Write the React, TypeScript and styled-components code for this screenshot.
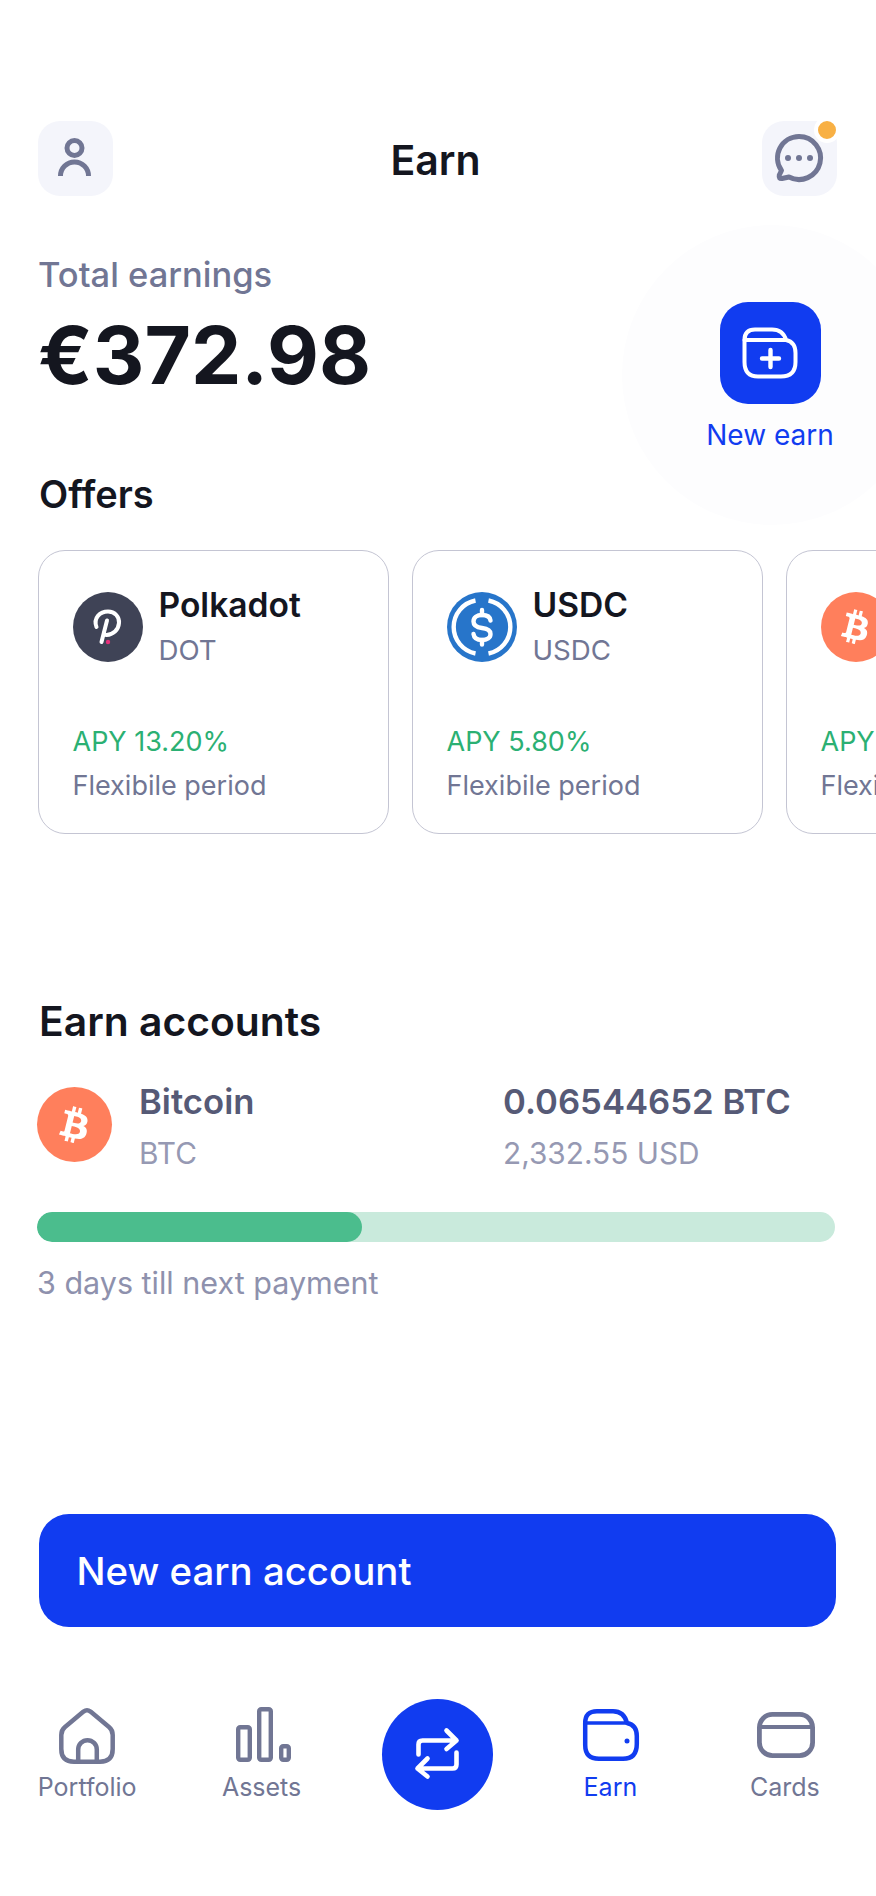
import React from "react";
import styled, { createGlobalStyle } from "styled-components";
import { FaBtc } from "react-icons/fa";

const GlobalStyle = createGlobalStyle`
  html, body { margin: 0; padding: 0; background: #fff; }
  * { box-sizing: border-box; }
  body { font-family: Inter, "Noto Sans", sans-serif; -webkit-font-smoothing: antialiased; }
`;

const BLUE = "#113cf0";
const DARK = "#14161f";
const GREY = "#717694";

const Page = styled.div`
  position: relative;
  width: 876px;
  height: 1896px;
  overflow: hidden;
  background: #fff;
  padding-top: 121px;
  display: flex;
  flex-direction: column;
`;

const Halo = styled.div`
  position: absolute;
  left: 622px;
  top: 225px;
  width: 300px;
  height: 300px;
  border-radius: 50%;
  background: #fdfdfe;
`;

const Header = styled.header`
  position: relative;
  display: flex;
  align-items: center;
  justify-content: space-between;
  padding: 0 39px 0 38px;
  height: 75px;
`;

const HeaderButton = styled.div`
  position: relative;
  width: 75px;
  height: 75px;
  border-radius: 22px;
  background: #f4f5fb;
  color: ${GREY};
`;

const IconSvg = styled.svg`
  display: block;
  overflow: visible;
`;

const NotifyDot = styled.span`
  position: absolute;
  top: -4px;
  right: -3px;
  width: 26px;
  height: 26px;
  border-radius: 50%;
  background: #f8b044;
  border: 4px solid #fff;
`;

const Title = styled.h1`
  margin: 2px 4px 0 0;
  font-size: 41px;
  line-height: 48px;
  font-weight: 600;
  color: ${DARK};
`;

const Summary = styled.section`
  position: relative;
  display: flex;
  justify-content: space-between;
  padding: 59px 43px 0 38px;
`;

const SummaryText = styled.div`
  display: flex;
  flex-direction: column;
  gap: 20px;
`;

const SummaryLabel = styled.div`
  font-size: 34.5px;
  line-height: 40px;
  font-weight: 500;
  color: ${GREY};
`;

const Amount = styled.div`
  font-size: 80px;
  line-height: 80px;
  font-weight: 700;
  color: ${DARK};
`;

const NewEarn = styled.div`
  margin-top: 47px;
  width: 126px;
  display: flex;
  flex-direction: column;
  align-items: center;
  gap: 14px;
`;

const NewEarnTile = styled.div`
  width: 101px;
  height: 102px;
  border-radius: 28px;
  background: ${BLUE};
  display: flex;
  align-items: center;
  justify-content: center;
  color: #fff;
`;

const NewEarnLabel = styled.div`
  font-size: 28px;
  line-height: 34px;
  white-space: nowrap;
  color: ${BLUE};
`;

const Heading = styled.h2<{ $size: number; $top: number; $line: number }>`
  position: relative;
  margin: ${(p) => p.$top}px 0 0;
  padding-left: 39px;
  font-size: ${(p) => p.$size}px;
  line-height: ${(p) => p.$line}px;
  font-weight: 600;
  color: ${DARK};
`;

const Carousel = styled.div`
  position: relative;
  margin-top: 33px;
  padding-left: 38px;
  display: flex;
  gap: 23px;
  overflow: hidden;
`;

const Card = styled.article`
  flex: 0 0 351px;
  height: 284px;
  border: 1.5px solid #c4c5d3;
  border-radius: 27px;
  padding: 41px 0 0 33.5px;
  background: #fff;
`;

const CardTop = styled.div`
  display: flex;
  gap: 16px;
  height: 133px;
`;

const CoinCircle = styled.div<{ $bg: string; $size: number }>`
  flex: 0 0 auto;
  width: ${(p) => p.$size}px;
  height: ${(p) => p.$size}px;
  border-radius: 50%;
  background: ${(p) => p.$bg};
  display: flex;
  align-items: center;
  justify-content: center;
  color: #fff;
`;

const BtcGlyph = styled(FaBtc)`
  transform: rotate(14deg);
`;

const CardName = styled.div`
  font-size: 33.6px;
  line-height: 40px;
  margin-top: -7px;
  font-weight: 600;
  color: ${DARK};
`;

const CardCode = styled.div`
  font-size: 27.7px;
  line-height: 34px;
  margin-top: 8px;
  color: ${GREY};
`;

const Apy = styled.div`
  font-size: 27px;
  line-height: 34px;
  color: #2bb073;
  white-space: nowrap;
`;

const Period = styled.div`
  font-size: 27px;
  line-height: 34px;
  margin-top: 10px;
  color: ${GREY};
  white-space: nowrap;
`;

const AccountRow = styled.div`
  margin-top: 41px;
  padding-left: 37px;
  display: grid;
  grid-template-columns: 102px 364px 1fr;
`;

const AccountCell = styled.div`
  display: flex;
  flex-direction: column;
  gap: 14px;
  margin-top: -6px;
`;

const AccountTitle = styled.div`
  font-size: 34.7px;
  line-height: 40px;
  font-weight: 600;
  color: #565a76;
  white-space: nowrap;
`;

const AccountSub = styled.div`
  font-size: 29.8px;
  line-height: 36px;
  color: #9699b3;
  white-space: nowrap;
`;

const Track = styled.div`
  margin: 41px 41px 0 37px;
  height: 30px;
  border-radius: 15px;
  background: #c9eadc;
  overflow: hidden;
`;

const Fill = styled.div`
  height: 100%;
  border-radius: 15px;
  background: #4bbd8d;
`;

const Hint = styled.div`
  margin-top: 23px;
  padding-left: 37px;
  font-size: 30.5px;
  line-height: 36px;
  color: #8e91ad;
`;

const PrimaryButton = styled.button`
  display: block;
  margin: 213px 40px 0 38.5px;
  height: 113px;
  border: 0;
  border-radius: 30px;
  background: ${BLUE};
  color: #fff;
  text-align: left;
  padding: 0 0 0 38px;
  font-family: inherit;
  font-size: 38.4px;
  font-weight: 500;
`;

const Nav = styled.nav`
  margin-top: 72px;
  padding-right: 4px;
  display: grid;
  grid-template-columns: repeat(5, 1fr);
`;

const NavItem = styled.div<{ $active?: boolean }>`
  display: flex;
  flex-direction: column;
  align-items: center;
  padding-top: 7px;
  color: ${(p) => (p.$active ? BLUE : GREY)};
`;

const NavLabel = styled.div`
  margin-top: 6px;
  font-size: 25px;
  line-height: 30px;
`;

const SwapButton = styled.div`
  justify-self: center;
  margin-left: 3px;
  width: 111px;
  height: 111px;
  border-radius: 50%;
  background: ${BLUE};
  color: #fff;
  display: flex;
  align-items: center;
  justify-content: center;
`;

const stroke = { fill: "none", stroke: "currentColor", strokeLinecap: "round", strokeLinejoin: "round" } as const;

const PersonIcon = () => (
  <IconSvg width="75" height="75" viewBox="0 0 75 75" {...stroke} strokeWidth={5}>
    <circle cx="36.5" cy="27" r="7.5" />
    <path d="M22.5 55 A14 14 0 0 1 50.5 55" strokeLinecap="butt" />
  </IconSvg>
);

const ChatIcon = () => (
  <IconSvg width="75" height="75" viewBox="0 0 75 75" {...stroke} strokeWidth={5}>
    <path d="M37 15.5 A21.5 21.5 0 1 1 27 56 L20 57.5 Q16.5 58 17.3 54 L19.5 49.5 A21.5 21.5 0 0 1 37 15.5Z" />
    <circle cx="26" cy="37" r="3" fill="currentColor" stroke="none" />
    <circle cx="37" cy="37" r="3" fill="currentColor" stroke="none" />
    <circle cx="48" cy="37" r="3" fill="currentColor" stroke="none" />
  </IconSvg>
);

const FolderPlusIcon = () => (
  <IconSvg width="60" height="56" viewBox="0 0 60 56" {...stroke} strokeWidth={4}>
    <path d="M15 4.5 H32 Q43 4.5 46 15 Q55.5 17 55.5 28 V37 Q55.5 51.5 41 51.5 H18 Q4.5 51.5 4.5 37 V15 Q4.5 4.5 15 4.5Z" />
    <path d="M4.5 15 H46" />
    <path d="M30.5 25 V42 M22 33.5 H39" strokeWidth={4.4} />
  </IconSvg>
);

const PolkadotLogo = () => (
  <IconSvg width="70" height="70" viewBox="0 0 70 70">
    <path
      d="M23.5 35 C20 26 27 19.5 35 19.5 C42 19.5 46.5 25 46 31 C45.5 38 40 42.5 33.5 43 M34 28.5 L28.5 50"
      fill="none"
      stroke="#fff"
      strokeWidth="4"
      strokeLinecap="round"
    />
    <circle cx="35" cy="50" r="2.2" fill="#e6307a" />
  </IconSvg>
);

const UsdcLogo = () => (
  <IconSvg width="70" height="70" viewBox="0 0 70 70">
    <g fill="none" stroke="#fff" strokeWidth="4.4" strokeLinecap="butt">
      <path d="M28.5 8.5 A27 27 0 0 0 28.5 61.5" />
      <path d="M41.5 8.5 A27 27 0 0 1 41.5 61.5" />
    </g>
    <g fill="none" stroke="#fff" strokeWidth="4.4" strokeLinecap="round">
      <path d="M43.5 28.5 C43 24.5 39.5 23 35 23 C30 23 26.5 25.5 26.5 29.5 C26.5 34 30.5 35.5 35 36 C39.5 36.5 43.5 38 43.5 42 C43.5 46 40 48 35 48 C30 48 27 46 26.5 42" />
      <path d="M35 18 V23 M35 48 V52.5" />
    </g>
  </IconSvg>
);

const HomeIcon = () => (
  <IconSvg width="60" height="60" viewBox="0 0 60 60" {...stroke} strokeWidth={4.5}>
    <path d="M26.5 5.6 L8 21 Q4.3 24 4.3 29 V43 Q4.3 55.7 17 55.7 H43 Q55.7 55.7 55.7 43 V29 Q55.7 24 52 21 L33.5 5.6 Q30 3 26.5 5.6Z" />
    <path d="M21.2 55 V43.5 a9.3 9.3 0 0 1 18.6 0 V55" />
  </IconSvg>
);

const BarsIcon = () => (
  <IconSvg width="60" height="60" viewBox="0 0 60 60" {...stroke} strokeWidth={4.4}>
    <rect x="6.2" y="21.2" width="11.6" height="32.6" rx="2" />
    <rect x="27.2" y="3.2" width="11.6" height="50.6" rx="2" />
    <rect x="49.2" y="40.2" width="7.6" height="13.6" rx="2" />
  </IconSvg>
);

const SwapIcon = () => (
  <IconSvg width="60" height="60" viewBox="0 0 60 60" {...stroke} strokeWidth={4.6}>
    <path d="M11.5 29.5 V19.5 Q11.5 15.5 15.5 15.5 H49.5 M39.5 5.5 L49.5 15.5 L39.5 24" />
    <path d="M49.5 27.5 V39.5 Q49.5 43.5 45.5 43.5 H10.5 M20.5 33.5 L10.5 43.5 L20.5 51.5" />
  </IconSvg>
);

const WalletIcon = () => (
  <IconSvg width="60" height="60" viewBox="0 0 60 60" {...stroke} strokeWidth={4.5}>
    <path d="M17 5.2 H33 Q44 5.2 47 17 Q56.8 19 56.8 30 V38 Q56.8 52.8 43 52.8 H19 Q5.2 52.8 5.2 39 V17 Q5.2 5.2 17 5.2Z" />
    <path d="M5.2 17 H47" strokeWidth={3.6} />
    <circle cx="47" cy="35" r="2.5" fill="currentColor" stroke="none" />
  </IconSvg>
);

const CardIcon = () => (
  <IconSvg width="60" height="60" viewBox="0 0 60 60" {...stroke} strokeWidth={4.8}>
    <rect x="4.4" y="8.4" width="53.2" height="41.2" rx="13" />
    <path d="M4.4 21 H57.6" strokeWidth={4} strokeLinecap="butt" />
  </IconSvg>
);

const BtcCircle = ({ size, glyph }: { size: number; glyph: number }) => (
  <CoinCircle $bg="#ff7f5c" $size={size}>
    <BtcGlyph size={glyph} />
  </CoinCircle>
);

const offers = [
  { name: "Polkadot", code: "DOT", apy: "APY 13.20%", logo: <CoinCircle $bg="#3f4356" $size={70}><PolkadotLogo /></CoinCircle> },
  { name: "USDC", code: "USDC", apy: "APY 5.80%", logo: <CoinCircle $bg="#2775ca" $size={70}><UsdcLogo /></CoinCircle> },
  { name: "Bitcoin", code: "BTC", apy: "APY 4.50%", logo: <BtcCircle size={70} glyph={34} /> },
];

export default function App() {
  return (
    <>
      <GlobalStyle />
      <Page>
        <Halo />
        <Header>
          <HeaderButton>
            <PersonIcon />
          </HeaderButton>
          <Title>Earn</Title>
          <HeaderButton>
            <ChatIcon />
            <NotifyDot />
          </HeaderButton>
        </Header>

        <Summary>
          <SummaryText>
            <SummaryLabel>Total earnings</SummaryLabel>
            <Amount>€372.98</Amount>
          </SummaryText>
          <NewEarn>
            <NewEarnTile>
              <FolderPlusIcon />
            </NewEarnTile>
            <NewEarnLabel>New earn</NewEarnLabel>
          </NewEarn>
        </Summary>

        <Heading $size={38} $line={46} $top={19}>Offers</Heading>
        <Carousel>
          {offers.map((o) => (
            <Card key={o.name}>
              <CardTop>
                {o.logo}
                <div>
                  <CardName>{o.name}</CardName>
                  <CardCode>{o.code}</CardCode>
                </div>
              </CardTop>
              <Apy>{o.apy}</Apy>
              <Period>Flexibile period</Period>
            </Card>
          ))}
        </Carousel>

        <Heading $size={40.8} $line={50} $top={162}>Earn accounts</Heading>
        <AccountRow>
          <BtcCircle size={75} glyph={36} />
          <AccountCell>
            <AccountTitle>Bitcoin</AccountTitle>
            <AccountSub>BTC</AccountSub>
          </AccountCell>
          <AccountCell>
            <AccountTitle>0.06544652 BTC</AccountTitle>
            <AccountSub>2,332.55 USD</AccountSub>
          </AccountCell>
        </AccountRow>
        <Track>
          <Fill style={{ width: `${(325 / 798) * 100}%` }} />
        </Track>
        <Hint>3 days till next payment</Hint>

        <PrimaryButton>New earn account</PrimaryButton>

        <Nav>
          <NavItem>
            <HomeIcon />
            <NavLabel>Portfolio</NavLabel>
          </NavItem>
          <NavItem>
            <BarsIcon />
            <NavLabel>Assets</NavLabel>
          </NavItem>
          <SwapButton>
            <SwapIcon />
          </SwapButton>
          <NavItem $active>
            <WalletIcon />
            <NavLabel>Earn</NavLabel>
          </NavItem>
          <NavItem>
            <CardIcon />
            <NavLabel>Cards</NavLabel>
          </NavItem>
        </Nav>
      </Page>
    </>
  );
}
